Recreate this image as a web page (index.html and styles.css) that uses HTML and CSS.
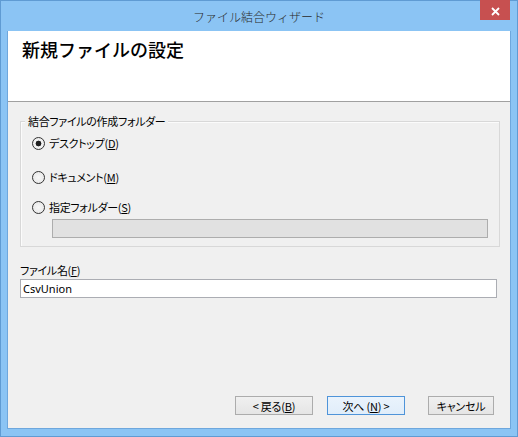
FILE: index.html
```html
<!DOCTYPE html>
<html lang="ja">
<head>
<meta charset="utf-8">
<title>ファイル結合ウィザード</title>
<link rel="stylesheet" href="styles.css">
</head>
<body>
<div class="window">
  <div class="titlebar">ファイル結合ウィザード</div>
  <div class="close">
    <svg width="30" height="20" viewBox="0 0 30 20"><path d="M12 8 L19 15 M19 8 L12 15" stroke="#fff" stroke-width="1.8" fill="none"/></svg>
  </div>
  <div class="client">
    <div class="header">
      <h1 class="header-title">新規ファイルの設定</h1>
    </div>
    <div class="body">
      <div class="group">
        <span class="group-title">結合ファイルの作成フォルダー</span>
        <div class="radio-row row1"><span class="radio checked"></span><span class="radio-text">デスクトップ(<u>D</u>)</span></div>
        <div class="radio-row row2"><span class="radio"></span><span class="radio-text">ドキュメント(<u>M</u>)</span></div>
        <div class="radio-row row3"><span class="radio"></span><span class="radio-text">指定フォルダー(<u>S</u>)</span></div>
        <div class="path-box"></div>
      </div>
      <div class="field-label">ファイル名(<u>F</u>)</div>
      <div class="text-input">CsvUnion</div>
    </div>
    <div class="footer">
      <div class="btn btn-back">&lt; 戻る(<u>B</u>)</div>
      <div class="btn btn-next btn-default">次へ (<u>N</u>) &gt;</div>
      <div class="btn btn-cancel">キャンセル</div>
    </div>
  </div>
</div>
</body>
</html>
```

FILE: styles.css
```css
* { box-sizing: border-box; }
html, body { margin: 0; padding: 0; }
body {
  width: 518px;
  height: 437px;
  overflow: hidden;
  font-family: "Noto Sans CJK JP", "Noto Sans", sans-serif;
  font-size: 12px;
  font-weight: 400;
  color: #000;
  background: #ffffff;
}
u { text-decoration: underline; text-underline-offset: 1px; }

.window {
  position: relative;
  width: 518px;
  height: 437px;
  border: 1px solid #5f9bd3;
  background: #8bc4f4;
  padding: 0 6px 7px 6px;
  display: flex;
  flex-direction: column;
}

.titlebar {
  height: 30px;
  flex: none;
  display: flex;
  align-items: center;
  justify-content: center;
  font-size: 12px;
  line-height: 14px;
  font-weight: 300;
  color: #2a2a2a;
  padding-top: 2px;
}

.close {
  position: absolute;
  top: -1px;
  right: 7px;
  width: 30px;
  height: 20px;
  background: #c75050;
  display: flex;
}
.close svg { display: block; }

.client {
  flex: 1;
  display: flex;
  flex-direction: column;
  background: #f0f0f0;
  border: 1px solid #6ea7dd;
  border-top: 0;
}

.header {
  height: 71px;
  flex: none;
  background: #ffffff;
  border-bottom: 1px solid #a0a0a0;
  padding: 6px 0 0 14px;
}
.header-title {
  margin: 0;
  font-size: 18px;
  line-height: 24px;
  font-weight: 500;
  color: #000;
}

.body {
  padding: 19px 10px 0 12px;
  font-feature-settings: "palt";
  font-size: 11px;
  letter-spacing: -0.3px;
}

.group {
  position: relative;
  width: 480px;
  height: 126px;
  border: 1px solid #d8d8d8;
  box-shadow: inset 1px 1px 0 #fbfbfb;
  padding-top: 13px;
}
.group-title {
  position: absolute;
  top: -8px;
  left: 4px;
  padding: 0 3px;
  line-height: 14px;
  background: #f0f0f0;
}

.radio-row {
  height: 16px;
  display: flex;
  align-items: center;
  padding-left: 11px;
}
.row2 { margin-top: 18px; }
.row3 { margin-top: 14px; }
.radio {
  width: 13px;
  height: 13px;
  flex: none;
  border: 1px solid #333333;
  border-radius: 50%;
  background: radial-gradient(circle at 50% 50%, #f8f8f8 0, #e4e4e4 100%);
  margin-right: 4px;
}
.radio.checked {
  background: radial-gradient(circle at 50% 50%, #1e1e1e 0, #1e1e1e 2.6px, #f4f4f4 3.2px, #e4e4e4 100%);
}
.radio-text { line-height: 16px; }

.path-box {
  margin: 4px 0 0 31px;
  width: 436px;
  height: 19px;
  border: 1px solid #adadad;
  background: #e1e1e1;
}

.field-label {
  margin-top: 16px;
  line-height: 14px;
}
.text-input {
  margin-top: 2px;
  width: 477px;
  height: 19px;
  border: 1px solid #abadb3;
  background: #ffffff;
  padding-left: 2px;
  font-family: "Noto Sans", "Liberation Sans", sans-serif;
  font-size: 11px;
  letter-spacing: 0;
  line-height: 17px;
}

.footer {
  margin-top: auto;
  display: flex;
  justify-content: flex-end;
  padding: 0 16px 13px 0;
  font-feature-settings: "palt";
}
.btn {
  height: 19px;
  border: 1px solid #acacac;
  background: linear-gradient(#f0f0f0, #e5e5e5);
  display: flex;
  align-items: center;
  justify-content: center;
  line-height: 14px;
  font-size: 11px;
  letter-spacing: -0.2px;
}
.btn-back { width: 78px; }
.btn-next { width: 78px; margin-left: 14px; }
.btn-cancel { width: 66px; margin-left: 23px; }
.btn-default {
  border-color: #4f94d9;
  background: linear-gradient(#eaf3fc, #e0edfa);
}
```
